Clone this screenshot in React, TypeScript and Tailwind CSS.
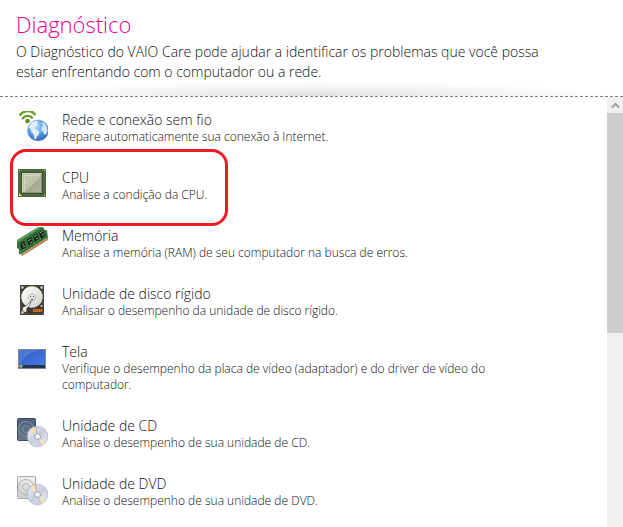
import React from 'react';

type Diagnostic = {
  id: string;
  title: string;
  description: string;
  icon: React.ReactNode;
  highlighted?: boolean;
};

const NetworkIcon = () => (
  <svg width="32" height="32" viewBox="0 0 32 32" aria-hidden="true">
    <defs>
      <radialGradient id="globe" cx="0.4" cy="0.3" r="0.75">
        <stop offset="0" stopColor="#b5d8f8" />
        <stop offset="0.55" stopColor="#5a9de0" />
        <stop offset="1" stopColor="#2458a8" />
      </radialGradient>
    </defs>
    <circle cx="22" cy="19.500" r="10.5" fill="url(#globe)" stroke="#6d9fd6" strokeWidth="0.6" />
    <path d="M14 13.500c2-2.800 4.500-3.600 6.500-3.600l1.800 1.600-1.500 1.200 1 1.500-2.800 1.600-.6 2.200 2.300.6 2.600 1.800-.6 2.800-2 2.600-.8 2.600-1.400-.6-.8-4.300-2.200-2.400-.6-2.800-2-1.600z" fill="#e3f0fb" />
    <path d="M25.500 11.500l3 .8 2.300 3.600.8 3.800-1.200 3.300-2 1-1-3-2.200-1.300.6-3.600 1.600-1.500z" fill="#d3e7f8" />
    <g fill="none" stroke="#6d9c2e" strokeLinecap="butt">
      <path d="M3.500 4.500C8.500-1.700 16-1 19.500 4" strokeWidth="2.400" />
      <path d="M6 8C9 4.100 14 3.800 16.700 7.500" strokeWidth="2.200" />
    </g>
    <circle cx="11.500" cy="10" r="2.300" fill="#5e8d24" />
  </svg>
);

const CpuIcon = () => (
  <svg width="32" height="32" viewBox="0 0 32 32" aria-hidden="true">
    <defs>
      <linearGradient id="die" x1="0" y1="0" x2="1" y2="1">
        <stop offset="0" stopColor="#b3b59c" />
        <stop offset="0.3" stopColor="#c4c6b0" />
        <stop offset="0.55" stopColor="#bcbea7" />
        <stop offset="0.57" stopColor="#a5a78e" />
        <stop offset="1" stopColor="#b3b59c" />
      </linearGradient>
    </defs>
    <rect x="2" width="28" height="28" fill="#4a683a" />
    <rect x="3.500" y="1.500" width="25" height="25" fill="none" stroke="#547041" strokeDasharray="1 1" />
    <rect x="5" y="3" width="22" height="22" fill="#3a5430" />
    <rect x="6" y="4" width="20" height="20" fill="#8f9279" />
    <path d="M6 4h20l-1 1H7v18l-1 1z" fill="#cfd0bd" />
    <rect x="7" y="5" width="18" height="18" fill="url(#die)" />
    <path d="M8.500 21.500v-15h15" fill="none" stroke="#d3d5c2" />
    <path d="M3 24l3 3H3z" fill="#ece68f" />
    <path d="M3 1h1v1H3zM28 1h1v1h-1zM28 26h1v1h-1z" fill="#ece68f" />
  </svg>
);

const MemoryIcon = () => (
  <svg width="32" height="32" viewBox="0 0 32 32" aria-hidden="true">
    <path d="M1 13L24 -1l3 .5 1 3 3 1 1 8-2 2L7 28l-4-1v-5l-2-1z" fill="#317038" />
    <path d="M1 13L24 -1l2 1L2 15z" fill="#66a25d" />
    <path d="M5 27L31 11l1 2L6 29z" fill="#b98454" />
    <path d="M5 27.500L31 11" stroke="#e3c59a" strokeDasharray="1 1" fill="none" />
    <path d="M4 17l4-3 2 6-4 3zM11 13l4-3 2 6-4 3zM17 9l4-3 2 6-4 3zM23 5l4-2 2 6-4 3z" fill="#14231a" />
    <g fill="none" stroke="#a5c2a2" strokeWidth="0.9">
      <path d="M6 18l2-1M7 20l2-1M12 14l3-2M14 16l2-1M18 10l3-2M20 12l2-1M24 6l3-2M26 8l2-1" />
      <path d="M4 25L29 9" strokeDasharray="1 3" />
    </g>
  </svg>
);

const HardDiskIcon = () => (
  <svg width="32" height="32" viewBox="0 0 32 32" aria-hidden="true">
    <defs>
      <linearGradient id="platter" x1="0" y1="0" x2="1" y2="1">
        <stop offset="0" stopColor="#ffffff" />
        <stop offset="1" stopColor="#cfcfca" />
      </linearGradient>
    </defs>
    <rect x="4" y="0" width="24" height="30" rx="1" fill="#3d3931" />
    <rect x="5" y="1" width="22" height="28" fill="none" stroke="#605b50" strokeWidth="0.8" />
    <circle cx="16" cy="12" r="10.700" fill="url(#platter)" />
    <circle cx="16" cy="12.500" r="3.500" fill="none" stroke="#8d8d89" strokeWidth="0.7" strokeDasharray="2 1" />
    <path d="M14 11h1v1h-1zM17 11h1v1h-1zM15 14h2v1h-2z" fill="#45433e" />
    <path d="M15 16l-1 4-3 3-1 5-2-2-2 1 1-5 3-1 3-3z" fill="#f7f7f5" stroke="#504c44" strokeWidth="0.7" />
    <path d="M6 27l3-3M9 27l-2-3" stroke="#d9d9d5" />
    <rect x="17" y="24" width="9" height="3" fill="#d96f21" />
    <path d="M18 25.500h7" stroke="#8a3f13" strokeDasharray="1 1" />
    <g fill="#dddcd6">
      <circle cx="6.500" cy="2.500" r="1.200" />
      <circle cx="25.500" cy="2.500" r="1.200" />
      <circle cx="25.500" cy="21" r="1" />
      <circle cx="6.500" cy="27.500" r="1.200" />
    </g>
  </svg>
);

const DisplayIcon = () => (
  <svg width="32" height="32" viewBox="0 0 32 32" aria-hidden="true">
    <defs>
      <linearGradient id="screen" x1="0" y1="0" x2="1" y2="1">
        <stop offset="0" stopColor="#2d57bd" />
        <stop offset="1" stopColor="#4a7fe8" />
      </linearGradient>
    </defs>
    <rect x="2" y="6" width="28" height="20" fill="#85859a" />
    <rect x="3" y="7" width="26" height="18" fill="url(#screen)" />
    <path d="M3 7h22C14 9 7 14 4 22H3z" fill="#5c85da" opacity="0.6" />
    <rect x="3" y="22" width="26" height="3" fill="#26334c" />
    <path d="M3 22h2v2H3z" fill="#e1774a" />
    <path d="M5 22h2v2H5z" fill="#63b565" />
    <path d="M4 24h2v1H4z" fill="#45b3e8" />
  </svg>
);

const OpticalDriveIcon = ({ id, top, bottom, edge, ring }: { id: string; top: string; bottom: string; edge: string; ring: string }) => (
  <svg width="32" height="32" viewBox="0 0 32 32" aria-hidden="true">
    <defs>
      <linearGradient id={`${id}-case`} x1="0" y1="0" x2="0" y2="1">
        <stop offset="0" stopColor={top} />
        <stop offset="1" stopColor={bottom} />
      </linearGradient>
      <linearGradient id={`${id}-disc`} x1="0" y1="0" x2="1" y2="1">
        <stop offset="0" stopColor="#f5f5fa" />
        <stop offset="0.5" stopColor="#c9cedd" />
        <stop offset="1" stopColor="#eff0f6" />
      </linearGradient>
    </defs>
    <rect x="1.500" y="1.500" width="18" height="22" rx="1" fill={`url(#${id}-case)`} stroke={edge} />
    <circle cx="10" cy="12" r="7.500" fill="none" stroke={ring} />
    <circle cx="10" cy="12" r="3.500" fill="none" stroke={ring} />
    <circle cx="21.500" cy="19.500" r="10.300" fill={`url(#${id}-disc)`} stroke="#a7adbd" strokeWidth="0.7" />
    <path d="M21.500 19.500L15 11.700l3-1.700z" fill="#f4eba1" />
    <path d="M21.500 19.500L18 10l3-.5z" fill="#efa7dc" />
    <path d="M21.500 19.500L21 9.500l3 .3z" fill="#b0e8cf" />
    <path d="M21.500 19.500l7.500 7-3 2z" fill="#e6f0a0" />
    <path d="M21.500 19.500L26 28.500l-3 1z" fill="#e9b4e5" />
    <path d="M21.500 19.500L23 29.500l-3-.2z" fill="#b9d8ef" />
    <circle cx="21.500" cy="19.500" r="3" fill="#dfe3ec" stroke="#7f899b" strokeDasharray="2 1" />
    <circle cx="21.500" cy="19.500" r="1.500" fill="#ffffff" />
  </svg>
);

const DIAGNOSTICS: Diagnostic[] = [
  {
    id: 'network',
    title: 'Rede e conexão sem fio',
    description: 'Repare automaticamente sua conexão à Internet.',
    icon: <NetworkIcon />,
  },
  {
    id: 'cpu',
    title: 'CPU',
    description: 'Analise a condição da CPU.',
    icon: <CpuIcon />,
    highlighted: true,
  },
  {
    id: 'memory',
    title: 'Memória',
    description: 'Analise a memória (RAM) de seu computador na busca de erros.',
    icon: <MemoryIcon />,
  },
  {
    id: 'disk',
    title: 'Unidade de disco rígido',
    description: 'Analisar o desempenho da unidade de disco rígido.',
    icon: <HardDiskIcon />,
  },
  {
    id: 'display',
    title: 'Tela',
    description: 'Verifique o desempenho da placa de vídeo (adaptador) e do driver de vídeo do computador.',
    icon: <DisplayIcon />,
  },
  {
    id: 'cd',
    title: 'Unidade de CD',
    description: 'Analise o desempenho de sua unidade de CD.',
    icon: <OpticalDriveIcon id="cd" top="#4e6178" bottom="#66788d" edge="#3c4b5e" ring="#8393a6" />,
  },
  {
    id: 'dvd',
    title: 'Unidade de DVD',
    description: 'Analise o desempenho de sua unidade de DVD.',
    icon: <OpticalDriveIcon id="dvd" top="#f0f0f0" bottom="#cbcbcb" edge="#a9a9a9" ring="#b3b3b3" />,
  },
];

const DiagnosticRow = ({ item }: { item: Diagnostic }) => (
  <li className="relative">
    <button type="button" className="flex w-full items-start gap-3.5 pb-6 pl-4 text-left">
      <span className="-mb-2 shrink-0">{item.icon}</span>
      <span className="flex max-w-[440px] flex-col">
        <span className="text-[14px] leading-[18px]">{item.title}</span>
        <span className="text-[12px] leading-4">{item.description}</span>
      </span>
    </button>
    {item.highlighted && (
      <span className="pointer-events-none absolute -top-5 left-2.5 h-[77px] w-[218px] rounded-2xl border-3 border-[#ed1c24]" />
    )}
  </li>
);

const Scrollbar = () => (
  <div className="flex w-4 shrink-0 flex-col bg-[#f0f0f0]">
    <button type="button" aria-label="Rolar para cima" className="flex h-4 items-center justify-center">
      <svg width="9" height="7" viewBox="0 0 9 7" aria-hidden="true">
        <path d="M1 5.500l3.500-3.500L8 5.500" fill="none" stroke="#a0a0a0" strokeWidth="2" />
      </svg>
    </button>
    <div className="h-[220px] bg-[#cdcdcd]" />
  </div>
);

export default function App() {
  return (
    <main className="flex h-screen flex-col overflow-hidden bg-white font-['Open_Sans','Noto_Sans',sans-serif] font-light text-[#111111]">
      <header className="shrink-0 px-4 pt-2">
        <h1 className="text-[22px] leading-8 font-light text-[#ec008c]">Diagnóstico</h1>
        <p className="max-w-[540px] pt-0.5 text-[14px] leading-5">
          O Diagnóstico do VAIO Care pode ajudar a identificar os problemas que você possa estar enfrentando com o computador ou a rede.
        </p>
      </header>
      <div className="h-3.5 shrink-0 bg-[radial-gradient(ellipse_50%_100%_at_50%_100%,#e2e2e2,#ffffff)]" />
      <div className="flex min-h-0 flex-1 border-t border-dashed border-[#808080]">
        <ul className="min-w-0 flex-1 overflow-hidden pt-3.5">
          {DIAGNOSTICS.map((item) => (
            <DiagnosticRow key={item.id} item={item} />
          ))}
        </ul>
        <Scrollbar />
      </div>
    </main>
  );
}
